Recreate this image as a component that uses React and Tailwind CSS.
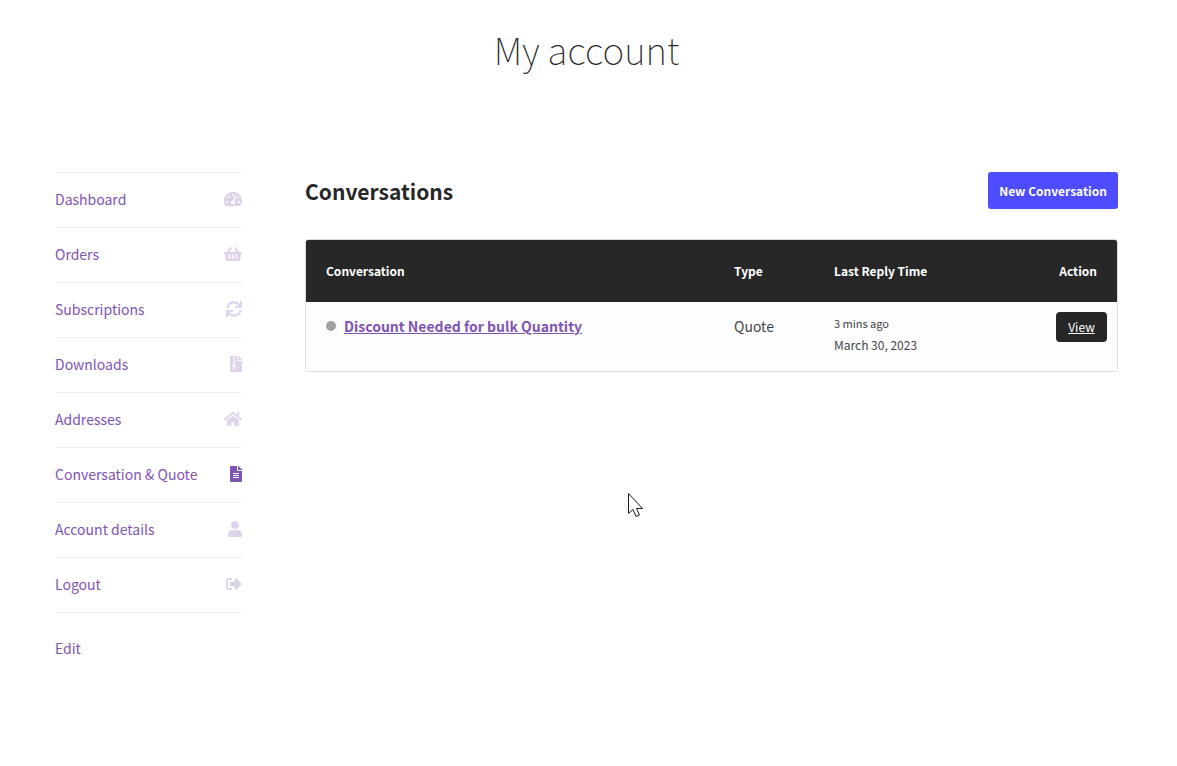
import {
  FaTachometerAlt,
  FaShoppingBasket,
  FaSync,
  FaFileArchive,
  FaHome,
  FaFileAlt,
  FaUser,
  FaSignOutAlt,
} from "react-icons/fa";

const links = [
  { label: "Dashboard", Icon: FaTachometerAlt, size: "w-[18px]" },
  { label: "Orders", Icon: FaShoppingBasket, size: "w-[18px]" },
  { label: "Subscriptions", Icon: FaSync, size: "w-4" },
  { label: "Downloads", Icon: FaFileArchive, size: "w-3" },
  { label: "Addresses", Icon: FaHome, size: "w-[18px]" },
  { label: "Conversation & Quote", Icon: FaFileAlt, size: "w-3", active: true },
  { label: "Account details", Icon: FaUser, size: "w-3.5" },
  { label: "Logout", Icon: FaSignOutAlt, size: "w-4" },
];

function AccountNav() {
  return (
    <nav aria-label="Account pages" className="w-[187px] shrink-0">
      <ul className="border-t border-[#f0f0f0]">
        {links.map(({ label, Icon, size, active }) => (
          <li key={label} className="border-b border-[#f0f0f0]">
            <a
              href="#"
              aria-current={active ? "page" : undefined}
              className="flex h-[54px] items-center justify-between pb-0.5 whitespace-nowrap text-[#7f54b3]"
            >
              {label}
              <Icon className={`h-4 ${size} ${active ? "" : "opacity-25"}`} />
            </a>
          </li>
        ))}
      </ul>
    </nav>
  );
}

function ConversationTable() {
  return (
    <div className="overflow-hidden rounded-[3px] border border-[#dcdcdc]">
      <table className="w-full border-collapse text-left">
        <thead>
          <tr className="h-[62px] bg-[#272727] text-[12px] text-white">
            <th className="px-5 font-bold">Conversation</th>
            <th className="w-[100px] pl-5 font-bold">Type</th>
            <th className="w-[200px] pl-5 font-bold">Last Reply Time</th>
            <th className="w-[103px] pr-5 text-right font-bold">Action</th>
          </tr>
        </thead>
        <tbody>
          <tr className="h-[69px] bg-[#fdfdfd] align-top">
            <td className="px-5 pt-3">
              <div className="flex items-center gap-2">
                <span className="size-2.5 rounded-full bg-[#a0a0a0]" />
                <a href="#" className="font-bold text-[#7f54b3] underline">
                  Discount Needed for bulk Quantity
                </a>
              </div>
            </td>
            <td className="pt-3 pl-5">Quote</td>
            <td className="pt-2.5 pl-5 leading-[22px]">
              <div className="text-[11px]">3 mins ago</div>
              <div className="text-[12px]">March 30, 2023</div>
            </td>
            <td className="pt-2.5 pr-2.5">
              <a
                href="#"
                className="ml-auto flex h-[30px] w-[51px] items-center justify-center rounded bg-[#272727] text-[12px] text-white underline"
              >
                View
              </a>
            </td>
          </tr>
        </tbody>
      </table>
    </div>
  );
}

export default function App() {
  return (
    <div className="relative min-h-screen bg-white pr-[59px] pl-[55px] font-['Source_Sans_Pro','Noto_Sans_CJK_SC',sans-serif] text-[14px] leading-6 text-[#43454b]">
      <header className="pt-5 text-center">
        <h1 className="text-[37px] leading-[58px] font-thin text-[#272727]">My account</h1>
      </header>
      <div className="mt-[94px] flex gap-[63px]">
        <div>
          <AccountNav />
          <a href="#" className="mt-[23px] inline-block text-[#7f54b3]">
            Edit
          </a>
        </div>
        <main className="min-w-0 flex-1">
          <div className="mb-[30px] flex items-center justify-between">
            <h2 className="text-[21px] leading-9 font-bold text-[#272727]">Conversations</h2>
            <button
              type="button"
              className="h-[37px] w-[130px] rounded-[3px] bg-[#4d4dff] text-[12px] font-bold whitespace-nowrap text-white"
            >
              New Conversation
            </button>
          </div>
          <ConversationTable />
        </main>
      </div>
      <svg
        aria-hidden="true"
        viewBox="0 0 16 25"
        className="absolute top-[493px] left-[628px] h-[25px] w-4"
      >
        <path
          d="M0.5 0.5V20.5L5 16.5L8 23.5L11.500 22L8.500 15.500H14.500Z"
          fill="#fff"
          stroke="#1c1c28"
          strokeWidth="1"
        />
      </svg>
    </div>
  );
}
